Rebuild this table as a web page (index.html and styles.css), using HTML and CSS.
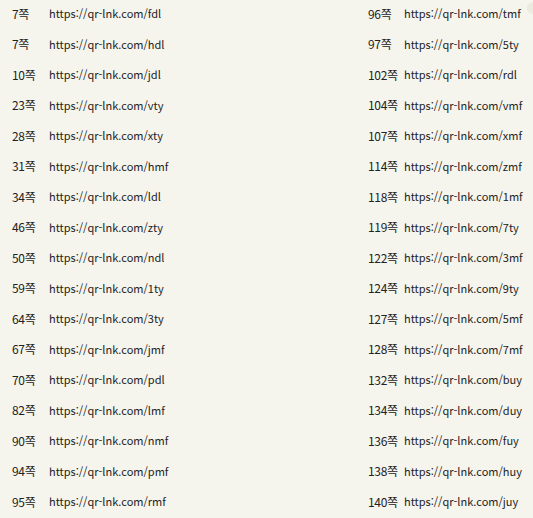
FILE: index.html
```html
<!doctype html>
<html lang="ko">
  <head>
    <meta charset="UTF-8" />
    <meta name="viewport" content="width=device-width, initial-scale=1.0" />
    <title>QR 링크 목록</title>
    <link rel="stylesheet" href="styles.css">
  </head>
  <body>
    <div class="scroll-dot"></div>
    <div class="link-list">
      <span class="page">7쪽</span><span class="url">https://qr-lnk.com/fdl</span>
      <span class="page">96쪽</span><span class="url">https://qr-lnk.com/tmf</span>

      <span class="page">7쪽</span><span class="url">https://qr-lnk.com/hdl</span>
      <span class="page">97쪽</span><span class="url">https://qr-lnk.com/5ty</span>

      <span class="page">10쪽</span><span class="url">https://qr-lnk.com/jdl</span>
      <span class="page">102쪽</span><span class="url">https://qr-lnk.com/rdl</span>

      <span class="page">23쪽</span><span class="url">https://qr-lnk.com/vty</span>
      <span class="page">104쪽</span><span class="url">https://qr-lnk.com/vmf</span>

      <span class="page">28쪽</span><span class="url">https://qr-lnk.com/xty</span>
      <span class="page">107쪽</span><span class="url">https://qr-lnk.com/xmf</span>

      <span class="page">31쪽</span><span class="url">https://qr-lnk.com/hmf</span>
      <span class="page">114쪽</span><span class="url">https://qr-lnk.com/zmf</span>

      <span class="page">34쪽</span><span class="url">https://qr-lnk.com/ldl</span>
      <span class="page">118쪽</span><span class="url">https://qr-lnk.com/1mf</span>

      <span class="page">46쪽</span><span class="url">https://qr-lnk.com/zty</span>
      <span class="page">119쪽</span><span class="url">https://qr-lnk.com/7ty</span>

      <span class="page">50쪽</span><span class="url">https://qr-lnk.com/ndl</span>
      <span class="page">122쪽</span><span class="url">https://qr-lnk.com/3mf</span>

      <span class="page">59쪽</span><span class="url">https://qr-lnk.com/1ty</span>
      <span class="page">124쪽</span><span class="url">https://qr-lnk.com/9ty</span>

      <span class="page">64쪽</span><span class="url">https://qr-lnk.com/3ty</span>
      <span class="page">127쪽</span><span class="url">https://qr-lnk.com/5mf</span>

      <span class="page">67쪽</span><span class="url">https://qr-lnk.com/jmf</span>
      <span class="page">128쪽</span><span class="url">https://qr-lnk.com/7mf</span>

      <span class="page">70쪽</span><span class="url">https://qr-lnk.com/pdl</span>
      <span class="page">132쪽</span><span class="url">https://qr-lnk.com/buy</span>

      <span class="page">82쪽</span><span class="url">https://qr-lnk.com/lmf</span>
      <span class="page">134쪽</span><span class="url">https://qr-lnk.com/duy</span>

      <span class="page">90쪽</span><span class="url">https://qr-lnk.com/nmf</span>
      <span class="page">136쪽</span><span class="url">https://qr-lnk.com/fuy</span>

      <span class="page">94쪽</span><span class="url">https://qr-lnk.com/pmf</span>
      <span class="page">138쪽</span><span class="url">https://qr-lnk.com/huy</span>

      <span class="page">95쪽</span><span class="url">https://qr-lnk.com/rmf</span>
      <span class="page">140쪽</span><span class="url">https://qr-lnk.com/juy</span>
    </div>
  </body>
</html>
```

FILE: styles.css
```css
html,
body {
  margin: 0;
  padding: 0;
  background-color: #f6f5ed;
  overflow: hidden;
}
body {
  font-family: "Noto Sans CJK KR", "Noto Sans", sans-serif;
  font-size: 12px;
  color: #222;
}
.link-list {
  display: grid;
  grid-template-columns: 37px 319px 36px auto;
  grid-auto-rows: 30.5px;
  align-items: center;
  padding: 0 0 0 12px;
  margin-top: -2px;
  white-space: nowrap;
}
.page {
  letter-spacing: -0.3px;
}
.url {
  font-size: 11px;
}
.scroll-dot {
  position: absolute;
  top: 2px;
  right: -6px;
  width: 12px;
  height: 12px;
  border-radius: 50%;
  background-color: #ecebdf;
}
```
